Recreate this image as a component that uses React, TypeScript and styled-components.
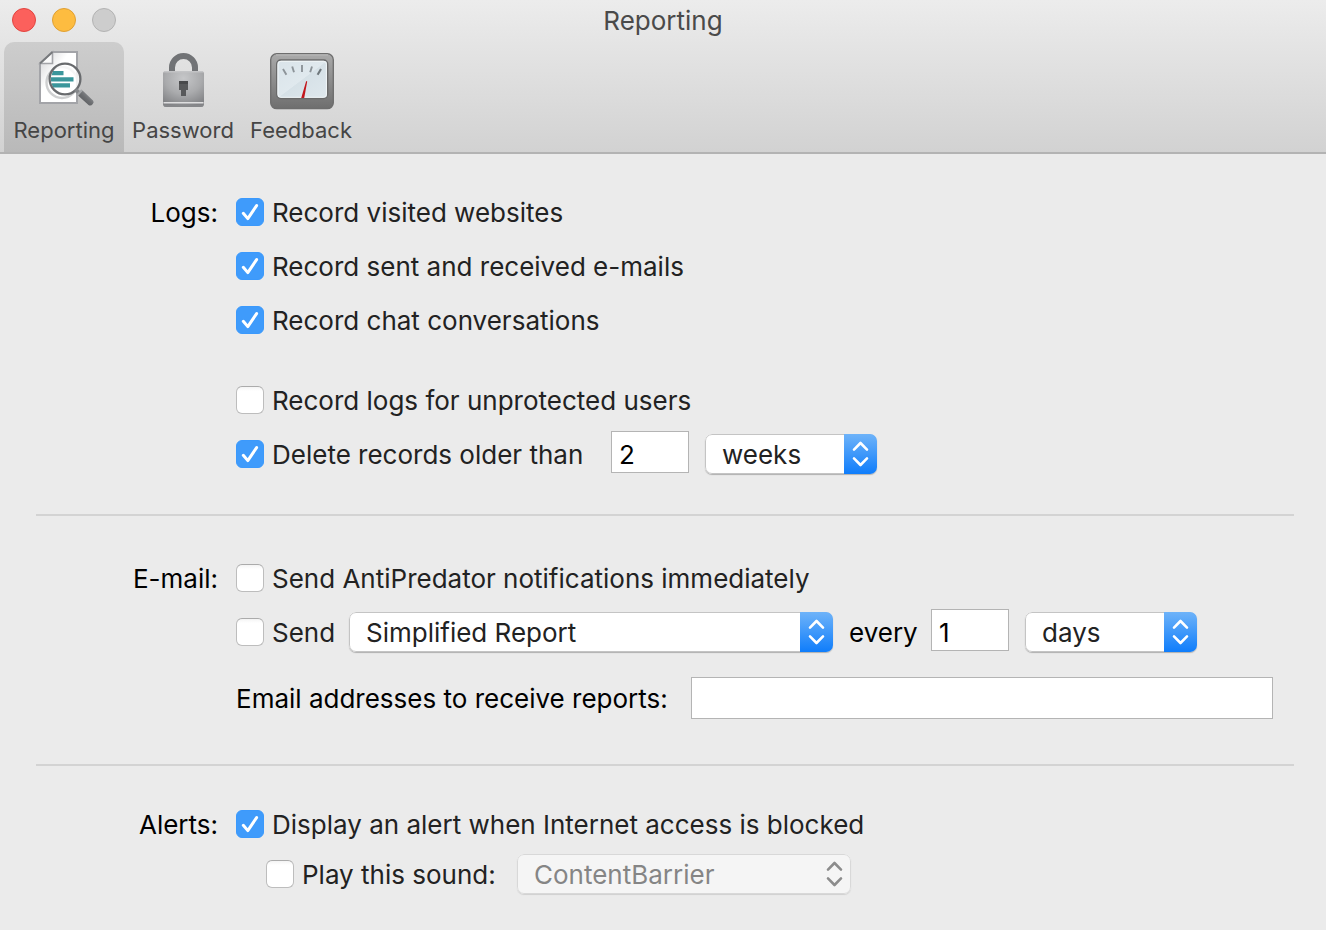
import React, { useState } from 'react';
import styled, { createGlobalStyle } from 'styled-components';

const GlobalStyle = createGlobalStyle`
  *, *::before, *::after { box-sizing: border-box; }
  body {
    margin: 0;
    background: #ebebeb;
    color: #000;
    font: 400 26px/32px Inter, "Liberation Sans", sans-serif;
  }
  button, input, select { font: inherit; color: inherit; margin: 0; }
`;

const Window = styled.div`
  min-height: 100vh;
  background: #ebebeb;
`;

const Header = styled.header`
  background: linear-gradient(#ececec, #d2d2d2);
  border-bottom: 2px solid #b3b3b3;
`;

const TitleBar = styled.div`
  display: grid;
  grid-template-columns: 1fr auto 1fr;
  align-items: center;
  height: 42px;
  padding: 0 12px 2px;
`;

const Lights = styled.div`
  display: flex;
  gap: 16px;
`;

const Light = styled.button<{ $fill: string; $edge: string }>`
  width: 24px;
  height: 24px;
  padding: 0;
  border: 1px solid ${(p) => p.$edge};
  border-radius: 50%;
  background: ${(p) => p.$fill};
`;

const Title = styled.h1`
  margin: 0;
  padding-top: 2px;
  font-size: 26px;
  font-weight: 400;
  line-height: 32px;
  color: #4a4a4a;
`;

const Toolbar = styled.nav`
  display: flex;
  padding: 0 4px;
`;

const Tab = styled.button<{ $active?: boolean }>`
  display: flex;
  flex-direction: column;
  align-items: center;
  gap: 6px;
  width: ${(p) => (p.$active ? 120 : 118)}px;
  height: 110px;
  padding: 8px 0 0;
  border: 0;
  border-radius: 10px 10px 0 0;
  background: ${(p) => (p.$active ? 'linear-gradient(#cdcdcd, #b9b9b9)' : 'none')};
  color: #454545;
  font-size: 22px;
  line-height: 28px;
  white-space: nowrap;
`;

const Content = styled.main`
  padding: 31px 32px 32px 36px;
`;

const Section = styled.section`
  display: grid;
  grid-template-columns: 182px 1fr;
  column-gap: 18px;
`;

const Heading = styled.h2`
  margin: 0;
  font-size: 26px;
  font-weight: 400;
  line-height: 56px;
  text-align: right;
`;

const Row = styled.div<{ $gapAbove?: number; $indent?: boolean }>`
  display: flex;
  align-items: center;
  gap: 16px;
  height: ${(p) => (p.$indent ? 46 : 54)}px;
  margin-top: ${(p) => p.$gapAbove ?? 0}px;
  padding-left: ${(p) => (p.$indent ? 30 : 0)}px;
  white-space: nowrap;
`;

const Divider = styled.hr<{ $above: number; $below: number }>`
  height: 2px;
  margin: ${(p) => p.$above}px 0 ${(p) => p.$below}px;
  border: 0;
  background: #d3d3d3;
`;

const CheckLabel = styled.label<{ $width?: number }>`
  display: flex;
  align-items: center;
  gap: 8px;
  flex: none;
  width: ${(p) => (p.$width ? `${p.$width}px` : 'auto')};
  color: #222;
`;

const CheckText = styled.span`
  padding-top: 2px;
`;

const TextLabel = styled.label<{ $width: number }>`
  flex: none;
  width: ${(p) => p.$width}px;
  padding-top: 2px;
`;

const Stack = styled.span`
  display: grid;
  flex: none;
  > * { grid-area: 1 / 1; }
  > svg { pointer-events: none; place-self: center; }
`;

const Box = styled.input`
  appearance: none;
  width: 28px;
  height: 28px;
  border: 1px solid #bdbdbd;
  border-top-color: #ababab;
  border-radius: 6px;
  background: linear-gradient(#f4f4f4, #fff 4px);
  &:checked { border-color: #3b99fc; background: #3f9bfb; }
`;

const Field = styled.input<{ $wide?: boolean }>`
  height: 42px;
  padding: 4px 7px 0;
  border: 1px solid #b4b4b4;
  border-radius: 0;
  background: #fff;
  outline: 0;
  ${(p) => (p.$wide ? 'flex: 1; min-width: 0; margin-right: 21px;' : 'width: 78px; margin-bottom: 4px;')}
`;

const Picker = styled(Stack)<{ $width: number; $off?: boolean }>`
  width: ${(p) => p.$width}px;
  height: 40px;
  border-radius: 7px;
  overflow: hidden;
  background: ${(p) => (p.$off ? '#f5f5f5' : '#fff')};
  box-shadow: 0 1px 1px ${(p) => (p.$off ? '#d0d0d0' : '#b0b0b0')};
  color: #222;
`;

const NativeSelect = styled.select`
  appearance: none;
  width: 100%;
  height: 40px;
  padding: 1px 40px 0 16px;
  border: 1px solid #c4c4c4;
  border-radius: 7px;
  background: none;
  outline: 0;
  &:disabled { opacity: 1; color: #858585; border-color: #d8d8d8; }
`;

const Arrows = styled.span<{ $off?: boolean }>`
  display: flex;
  align-items: center;
  justify-content: center;
  justify-self: end;
  width: 33px;
  height: 40px;
  pointer-events: none;
  color: ${(p) => (p.$off ? '#8c8c8c' : '#fff')};
  background: ${(p) => (p.$off ? 'none' : 'linear-gradient(#6eb3f9, #0f7dfb)')};
`;

function Check({ text, on, width }: { text: string; on?: boolean; width?: number }) {
  const [checked, setChecked] = useState(!!on);
  return (
    <CheckLabel $width={width}>
      <Stack>
        <Box type="checkbox" checked={checked} onChange={(e) => setChecked(e.target.checked)} />
        {checked && (
          <svg width="28" height="28" viewBox="0 0 28 28" fill="none" stroke="#fff" strokeWidth="3" strokeLinecap="round" strokeLinejoin="round">
            <path d="M7.3 15.3 L11.8 20.6 L20.6 7.6" />
          </svg>
        )}
      </Stack>
      <CheckText>{text}</CheckText>
    </CheckLabel>
  );
}

function Select({ label, options, width, disabled }: { label: string; options: string[]; width: number; disabled?: boolean }) {
  return (
    <Picker $width={width} $off={disabled}>
      <NativeSelect aria-label={label} disabled={disabled}>
        {options.map((o) => (
          <option key={o}>{o}</option>
        ))}
      </NativeSelect>
      <Arrows $off={disabled}>
        <svg width="17" height="26" viewBox="0 0 17 26" fill="none" stroke="currentColor" strokeWidth="2.6" strokeLinecap="round" strokeLinejoin="round">
          <path d="M2 8.6 L8.5 2 L15 8.6 M2 17.4 L8.5 24 L15 17.4" />
        </svg>
      </Arrows>
    </Picker>
  );
}

function ReportIcon() {
  return (
    <svg width="64" height="60" viewBox="0 0 64 60" aria-hidden="true">
      <defs>
        <linearGradient id="page" x1="0" y1="0" x2="1" y2="1">
          <stop offset="0" stopColor="#d0d0d2" />
          <stop offset=".4" stopColor="#fff" />
        </linearGradient>
        <linearGradient id="handle" x1="0" y1="1" x2="1" y2="0">
          <stop offset="0" stopColor="#4b4d50" />
          <stop offset=".5" stopColor="#6c6e71" />
          <stop offset="1" stopColor="#a9abae" />
        </linearGradient>
      </defs>
      <path d="M20.5 2 H45 V53 H8 V13.5 Z" fill="url(#page)" stroke="#a3a4a8" strokeWidth="2" />
      <path d="M8 13.5 L20.5 2 V13.5 Z" fill="#fafafa" stroke="#a3a4a8" strokeWidth="1.6" />
      <path d="M8 13.5 L20.5 2" stroke="#77797c" strokeWidth="1.8" />
      <circle cx="30" cy="32.5" r="15.5" fill="none" stroke="#bfc0c2" strokeWidth="2.4" opacity=".75" />
      <circle cx="33" cy="29" r="15" fill="#fff" fillOpacity=".8" />
      <path d="M21 21 H31.5 V25.3 H19.5 Z M19 27.3 H41.5 V31.5 H19 Z M19.5 33.3 H38 V37.5 H21 Z" fill="#3b969b" />
      <circle cx="33" cy="29" r="15.4" fill="none" stroke="#696b6e" strokeWidth="2.3" />
      <path d="M43.5 39.5 L47.5 43.5" stroke="#85878a" strokeWidth="4" />
      <path d="M46 45.5 L50.5 40.5 L61 50.5 Q62.5 52 60.8 54 Q58.8 56.6 56.5 55 Z" fill="url(#handle)" />
      <path d="M45.5 45 L50 40" stroke="#a4a6a9" strokeWidth="2" />
    </svg>
  );
}

function LockIcon() {
  return (
    <svg width="64" height="60" viewBox="0 0 64 60" aria-hidden="true">
      <defs>
        <radialGradient id="lock" cx=".5" cy=".2" r=".8">
          <stop offset="0" stopColor="#c6c7c9" />
          <stop offset=".55" stopColor="#aaabad" />
          <stop offset="1" stopColor="#828386" />
        </radialGradient>
      </defs>
      <path d="M21 23 V17.5 A11.5 11.5 0 0 1 44 17.5 V23" fill="none" stroke="#717376" strokeWidth="6" />
      <rect x="12" y="21" width="41" height="36" rx="3" fill="url(#lock)" />
      <path d="M13 21.8 H52" stroke="#c3c4c6" strokeWidth="1.4" />
      <path d="M12.5 52.8 H52.5" stroke="#dededf" strokeWidth="1.6" />
      <path d="M13 56 H52" stroke="#8a8b8d" strokeWidth="1.2" />
      <path d="M28 31 H37 V40 H35 V46 H30 V40 H28 Z" fill="#58595b" />
      <path d="M28 31 H37 V34 H28 Z" fill="#48494b" />
    </svg>
  );
}

function GaugeIcon() {
  return (
    <svg width="64" height="60" viewBox="-1 0 64 60" overflow="visible" aria-hidden="true">
      <defs>
        <linearGradient id="case" x1="0" y1="0" x2="0" y2="1">
          <stop offset="0" stopColor="#aaa" />
          <stop offset="1" stopColor="#6e6e6e" />
        </linearGradient>
        <linearGradient id="dial" x1="0" y1="0" x2="1" y2="1">
          <stop offset="0" stopColor="#d9e3e9" />
          <stop offset=".5" stopColor="#e0e9ee" />
          <stop offset=".51" stopColor="#d6e1e7" />
          <stop offset="1" stopColor="#dfe8ed" />
        </linearGradient>
      </defs>
      <rect x=".7" y="3.7" width="62.6" height="55" rx="6" fill="url(#case)" stroke="#6d6d6d" strokeWidth="1.3" />
      <path d="M6 4.9 H58" stroke="#bcbcbc" strokeWidth="1" />
      <rect x="6.7" y="10" width="51" height="38.5" rx="4" fill="url(#dial)" stroke="#696969" strokeWidth="1.4" />
      <rect x="8" y="11.3" width="48.4" height="36" rx="3" fill="none" stroke="#f1f5f7" strokeWidth="1" />
      <path d="M13 19 L16.4 24.8 M22.2 16.5 L24 22.3 M32 15 V22 M42 16.5 L40.2 22.3" stroke="#8d9499" strokeWidth="1.9" />
      <path d="M51 19 L47.6 24.8" stroke="#6f777b" strokeWidth="2.1" />
      <path d="M36.2 31 L37.2 31.5 L34.2 48 H31.2 Z" fill="#c3161c" />
    </svg>
  );
}

export default function App() {
  return (
    <Window>
      <GlobalStyle />
      <Header>
        <TitleBar>
          <Lights>
            <Light aria-label="Close" $fill="#fc605c" $edge="#e2443f" />
            <Light aria-label="Minimize" $fill="#fdbc40" $edge="#e0a033" />
            <Light aria-label="Zoom" disabled $fill="#cdcdcd" $edge="#b3b3b3" />
          </Lights>
          <Title>Reporting</Title>
        </TitleBar>
        <Toolbar>
          <Tab $active aria-current="page"><ReportIcon />Reporting</Tab>
          <Tab><LockIcon />Password</Tab>
          <Tab><GaugeIcon />Feedback</Tab>
        </Toolbar>
      </Header>
      <Content>
        <Section>
          <Heading>Logs:</Heading>
          <div>
            <Row><Check on text="Record visited websites" /></Row>
            <Row><Check on text="Record sent and received e-mails" /></Row>
            <Row><Check on text="Record chat conversations" /></Row>
            <Row $gapAbove={26}><Check text="Record logs for unprotected users" /></Row>
            <Row>
              <Check on text="Delete records older than" width={359} />
              <Field aria-label="Age of records" defaultValue="2" />
              <Select label="Age unit" width={172} options={['weeks', 'days', 'months']} />
            </Row>
          </div>
        </Section>
        <Divider $above={33} $below={35} />
        <Section>
          <Heading>E-mail:</Heading>
          <div>
            <Row><Check text="Send AntiPredator notifications immediately" /></Row>
            <Row>
              <Check text="Send" width={97} />
              <Select label="Report type" width={484} options={['Simplified Report', 'Full Report']} />
              <TextLabel htmlFor="interval" $width={66}>every</TextLabel>
              <Field id="interval" defaultValue="1" />
              <Select label="Interval unit" width={172} options={['days', 'weeks', 'months']} />
            </Row>
            <Row $gapAbove={12}>
              <TextLabel htmlFor="addresses" $width={439}>Email addresses to receive reports:</TextLabel>
              <Field id="addresses" $wide />
            </Row>
          </div>
        </Section>
        <Divider $above={39} $below={31} />
        <Section>
          <Heading>Alerts:</Heading>
          <div>
            <Row><Check on text="Display an alert when Internet access is blocked" /></Row>
            <Row $indent>
              <Check text="Play this sound:" width={235} />
              <Select label="Sound" width={334} disabled options={['ContentBarrier']} />
            </Row>
          </div>
        </Section>
      </Content>
    </Window>
  );
}
